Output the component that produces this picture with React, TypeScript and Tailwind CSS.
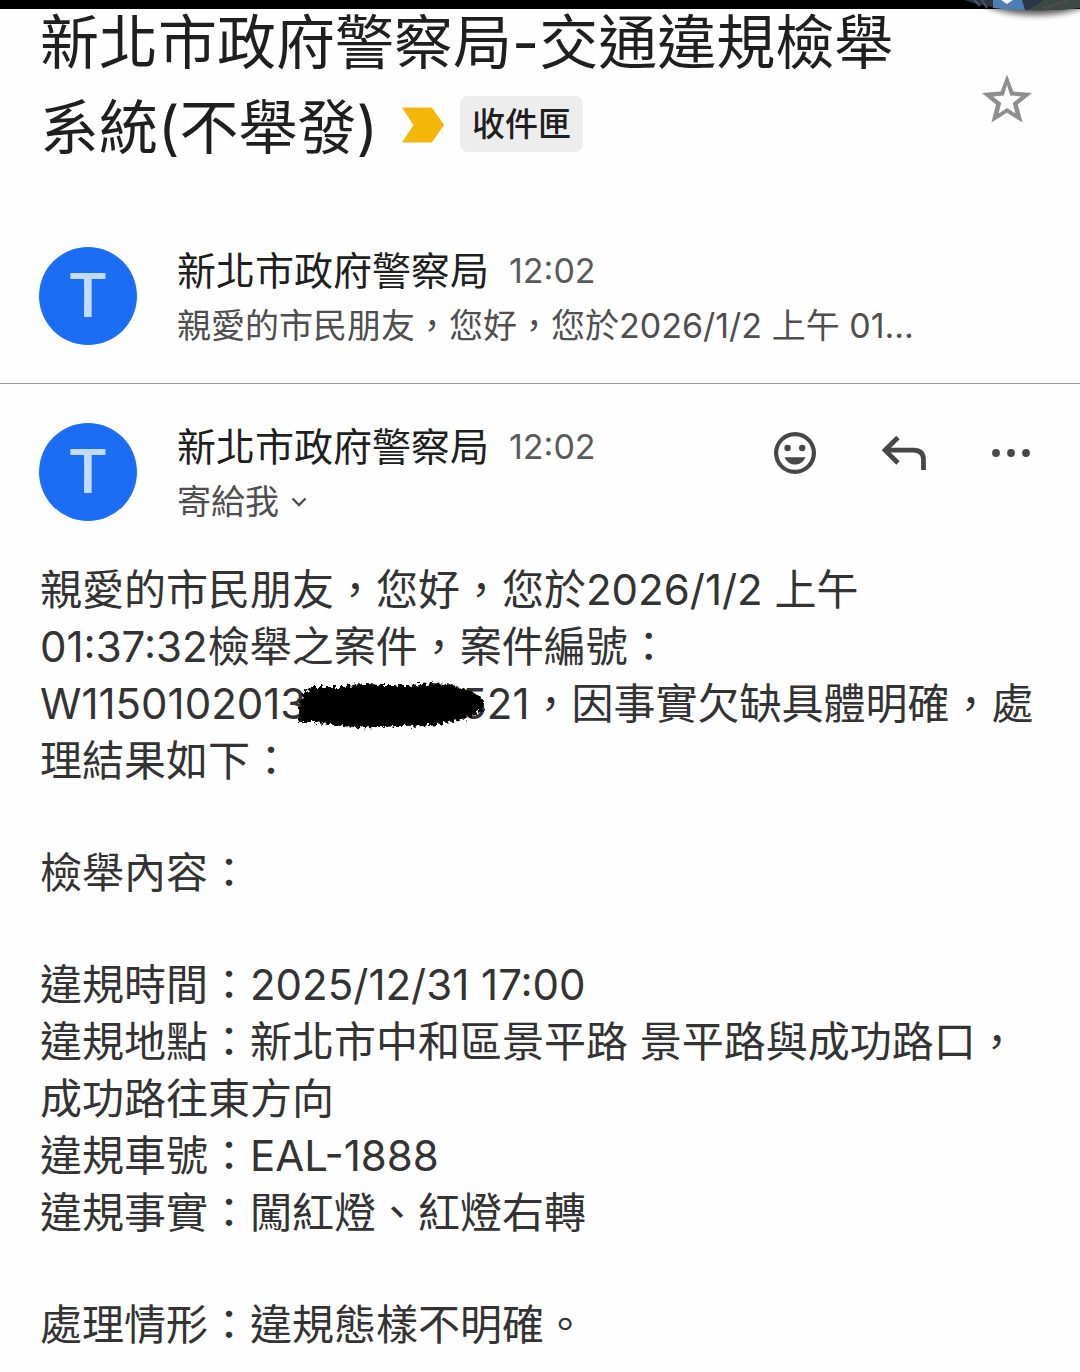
const SENDER = "新北市政府警察局";

function Avatar() {
  return (
    <div className="mt-1 flex size-[98px] shrink-0 items-center justify-center rounded-full bg-[#1b6ef3] font-['Roboto',sans-serif] text-[62px] leading-none font-medium text-[#c3dafc]">
      T
    </div>
  );
}

function ImportantMarker() {
  return (
    <svg viewBox="0 0 42 36" className="h-9 w-[42px]" aria-hidden="true">
      <path d="M0 0.5H28.5Q30 0.5 31 2L42 18L31 34Q30 35.5 28.5 35.5H0L11.5 18Z" fill="#f5b60a" />
    </svg>
  );
}

function StarIcon() {
  return (
    <svg viewBox="0 0 50 50" className="size-[50px]" aria-hidden="true">
      <path
        fillRule="evenodd"
        fill="#8e8e8e"
        d="M25 0.5L31.3 17.6L50 19L35.8 30.6L40.6 48.5L25 38.8L9.4 48.5L14 30.6L0 19L18.7 17.6Z M25 11L21.8 21.4L11 22.4L19.2 29L16.6 39.6L25 34L33.4 39.6L30.8 29L39 22.4L28.2 21.4Z"
      />
    </svg>
  );
}

function SmileIcon() {
  return (
    <svg viewBox="0 0 42 42" className="size-[42px]" aria-hidden="true">
      <circle cx="21" cy="21" r="18.9" fill="none" stroke="#474747" strokeWidth="4.2" />
      <circle cx="13.6" cy="16" r="3.2" fill="#474747" />
      <circle cx="28.2" cy="16" r="3.2" fill="#474747" />
      <path d="M10.6 25.3H31.4C29.7 29.8 25.8 32.6 21 32.6S12.3 29.8 10.6 25.3Z" fill="#474747" />
    </svg>
  );
}

function ReplyIcon() {
  return (
    <svg viewBox="0 0 44 36" className="h-9 w-11" aria-hidden="true">
      <path d="M16 2.5L3 15.2L16 28M3 15.2H31.5Q41.5 15.2 41.5 25.2V35" fill="none" stroke="#474747" strokeWidth="4.8" />
    </svg>
  );
}

function MoreIcon() {
  return (
    <svg viewBox="0 0 38 8" className="h-2 w-[38px]" aria-hidden="true">
      <circle cx="4" cy="4" r="3.9" fill="#474747" />
      <circle cx="19" cy="4" r="3.9" fill="#474747" />
      <circle cx="34" cy="4" r="3.9" fill="#474747" />
    </svg>
  );
}

// brush stroke over the middle of the case number
function Redaction() {
  return (
    <span className="relative inline-block w-[155px]">
      <svg viewBox="0 0 200 56" className="absolute -top-[42px] -left-4 h-14 w-[200px]" aria-hidden="true">
        <defs>
          <filter id="rough" x="-5%" y="-15%" width="110%" height="130%">
            <feTurbulence type="fractalNoise" baseFrequency="0.3" numOctaves="2" seed="4" />
            <feDisplacementMap in="SourceGraphic" scale="9" />
            <feGaussianBlur stdDeviation="0.6" />
          </filter>
        </defs>
        <path
          filter="url(#rough)"
          d="M7 45L10 30Q8 24 12 18L20 10L52 10Q74 5 88 8L120 8Q150 4 166 9L182 15Q195 20 194 27Q193 36 180 40L160 45Q140 49 108 49Q70 52 44 48L26 45Z"
        />
      </svg>
    </span>
  );
}

function TopBar() {
  return (
    <div className="relative h-[9px] bg-black">
      <svg viewBox="0 0 120 24" className="absolute top-0 right-0 h-6 w-[120px]" aria-hidden="true">
        <defs>
          <filter id="shade" x="-10%" y="-100%" width="120%" height="300%">
            <feGaussianBlur stdDeviation="3" />
          </filter>
        </defs>
        <ellipse cx="76" cy="-8" rx="62" ry="23" fill="#000" opacity="0.65" filter="url(#shade)" />
        <path d="M0 0H120V9H0Z" fill="#000" />
        <path d="M5 0H120V8Q96 11 68 10Q26 9 5 0Z" fill="#2c3544" />
        <path d="M33 0H62L65 10Q48 10 33 8Z" fill="#4d7fb5" />
        <path d="M41 0H53L47 4Z" fill="#f2f2f2" />
        <path d="M68 10L84 0H120V8Q96 11 68 10Z" fill="#3b4a45" />
        <path d="M84 8L108 1" stroke="#75494b" strokeWidth="2" strokeDasharray="2 2" />
        <path d="M14 0L20 6M22 0L27 8" stroke="#4a566d" strokeWidth="2" />
      </svg>
    </div>
  );
}

function SenderLine() {
  return (
    <div className="flex items-center text-[39px] leading-[56px]">
      {SENDER}
      <time className="ml-5 text-[34px] text-[#5a5a5a]">12:02</time>
    </div>
  );
}

export default function App() {
  return (
    <main
      lang="zh-Hant"
      className="min-h-screen overflow-hidden bg-[#fefefe] pb-4 font-['Inter','Noto_Sans_CJK_TC',sans-serif] text-[#1f1f1f]"
    >
      <TopBar />

      <header className="flex items-center justify-between pr-12 pl-10">
        <h1 className="flex flex-col gap-[18px] text-[59px] leading-[67px]">
          <span>{SENDER}-交通違規檢舉</span>
          <span className="flex items-center">
            系統(不舉發)
            <span className="mb-1.5 ml-6">
              <ImportantMarker />
            </span>
            <span className="mb-2 ml-4 rounded-lg bg-[#ededed] px-3 text-[33px] leading-14 font-medium">
              收件匣
            </span>
          </span>
        </h1>
        <button aria-label="star" className="mt-7">
          <StarIcon />
        </button>
      </header>

      <section className="mt-[82px] flex items-start border-b border-[#9a9a9a] px-[39px] pb-[30px]">
        <Avatar />
        <div className="ml-10 min-w-0">
          <SenderLine />
          <p className="text-[34px] leading-[54px] whitespace-nowrap text-[#4f4f4f]">
            親愛的市民朋友，您好，您於2026/1/2 上午 01...
          </p>
        </div>
      </section>

      <section className="flex items-center justify-between pt-[35px] pr-[50px] pl-[39px]">
        <div className="flex items-start">
          <Avatar />
          <div className="ml-10">
            <SenderLine />
            <button className="flex items-center text-[34px] leading-[54px] text-[#4f4f4f]">
              寄給我
              <svg viewBox="0 0 16 10" className="ml-3 h-[10px] w-4" aria-hidden="true">
                <path d="M1.5 1.5L8 8L14.5 1.5" fill="none" stroke="#4f4f4f" strokeWidth="2.4" />
              </svg>
            </button>
          </div>
        </div>
        <div className="mb-[42px] flex items-center gap-[66px]">
          <button aria-label="react">
            <SmileIcon />
          </button>
          <button aria-label="reply">
            <ReplyIcon />
          </button>
          <button aria-label="more">
            <MoreIcon />
          </button>
        </div>
      </section>

      <article className="mt-8 flex flex-col gap-[55px] px-10 text-[42px] leading-[57px] whitespace-nowrap text-[#333]">
        <p>
          親愛的市民朋友，您好，您於2026/1/2 上午
          <br />
          01:37:32檢舉之案件，案件編號：
          <br />
          W1150102013
          <Redaction />
          521，因事實欠缺具體明確，處
          <br />
          理結果如下：
        </p>
        <p>檢舉內容：</p>
        <p>
          違規時間：2025/12/31 17:00
          <br />
          違規地點：新北市中和區景平路 景平路與成功路口，
          <br />
          成功路往東方向
          <br />
          違規車號：EAL-1888
          <br />
          違規事實：闖紅燈、紅燈右轉
        </p>
        <p>處理情形：違規態樣不明確。</p>
      </article>
    </main>
  );
}
